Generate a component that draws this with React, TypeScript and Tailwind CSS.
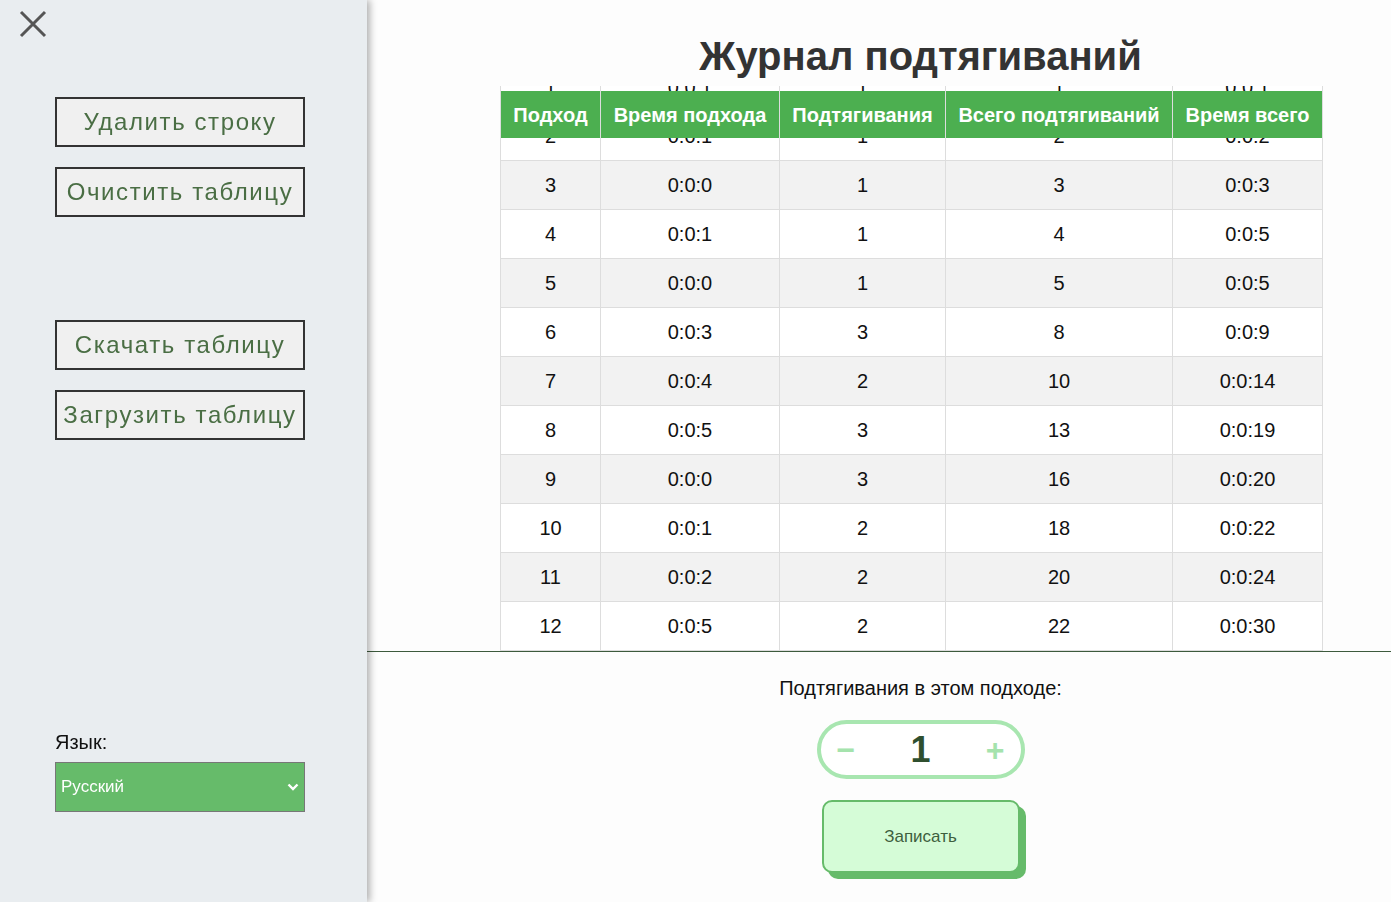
import React, { useEffect, useRef } from "react";

const ROWS = [
    [1, "0:0:1", 1, 1, "0:0:1"],
    [2, "0:0:1", 1, 2, "0:0:2"],
    [3, "0:0:0", 1, 3, "0:0:3"],
    [4, "0:0:1", 1, 4, "0:0:5"],
    [5, "0:0:0", 1, 5, "0:0:5"],
    [6, "0:0:3", 3, 8, "0:0:9"],
    [7, "0:0:4", 2, 10, "0:0:14"],
    [8, "0:0:5", 3, 13, "0:0:19"],
    [9, "0:0:0", 3, 16, "0:0:20"],
    [10, "0:0:1", 2, 18, "0:0:22"],
    [11, "0:0:2", 2, 20, "0:0:24"],
    [12, "0:0:5", 2, 22, "0:0:30"],
];

const HEADERS = [
    { label: "Подход", w: "w-[101px]" },
    { label: "Время подхода", w: "w-[179px]" },
    { label: "Подтягивания", w: "w-[166px]" },
    { label: "Всего подтягиваний", w: "w-[227px]" },
    { label: "Время всего", w: "w-[150px]" },
];

const SideButton = ({ children }: { children: React.ReactNode }) => (
    <button className="h-[50px] w-[250px] border-2 border-[#333] bg-[#f0f0f0] text-[24px] tracking-[1.6px] text-[#4a6e44]">
        {children}
    </button>
);

export default function App() {
    const scrollRef = useRef<HTMLDivElement>(null);

    useEffect(() => {
        // table keeps the newest set in view
        if (scrollRef.current) scrollRef.current.scrollTop = scrollRef.current.scrollHeight;
    }, []);

    return (
        <div className="flex h-[902px] w-full overflow-hidden bg-[#fdfdfd] font-['Liberation_Sans',Arial,sans-serif]">
            {/* Sidebar */}
            <aside className="relative z-10 flex h-full w-[367px] shrink-0 flex-col bg-[#e9edf0] px-[55px] shadow-[3px_0_7px_rgba(0,0,0,0.3)]">
                <button className="absolute left-[19px] top-[10px]" aria-label="close">
                    <svg width="28" height="28" viewBox="0 0 28 28">
                        <path d="M2 2 L26 26 M26 2 L2 26" stroke="#555" strokeWidth="3" />
                    </svg>
                </button>

                <div className="mt-[97px] flex flex-col gap-[20px]">
                    <SideButton>Удалить строку</SideButton>
                    <SideButton>Очистить таблицу</SideButton>
                </div>
                <div className="mt-[103px] flex flex-col gap-[20px]">
                    <SideButton>Скачать таблицу</SideButton>
                    <SideButton>Загрузить таблицу</SideButton>
                </div>

                <div className="mt-auto mb-[90px]">
                    <label className="block text-[20px] leading-[23px] text-[#111]">Язык:</label>
                    <div className="relative mt-[8px] h-[50px] w-[250px]">
                        <select className="h-full w-full appearance-none border border-[#777] bg-[#66bb6a] pl-[5px] text-[17px] text-white outline-none">
                            <option>Русский</option>
                            <option>English</option>
                        </select>
                        <svg className="pointer-events-none absolute right-[6px] top-[20px]" width="12" height="10" viewBox="0 0 12 10">
                            <path d="M1.5 2.5 L6 7 L10.5 2.5" stroke="#fff" strokeWidth="2.4" fill="none" />
                        </svg>
                    </div>
                </div>
            </aside>

            {/* Main */}
            <main className="flex min-w-0 flex-1 flex-col">
                <div className="h-[86px] shrink-0 pl-[83px] pt-[36px] text-center">
                    <h1 className="text-[40px] font-bold leading-none text-[#333]">Журнал подтягиваний</h1>
                </div>

                <div
                    ref={scrollRef}
                    className="h-[565px] shrink-0 overflow-y-auto [scrollbar-width:none]"
                >
                    <table className="ml-[133px] table-fixed border-separate border-spacing-0 text-[20px]">
                        <thead className="sticky top-[5px]">
                            <tr>
                                {HEADERS.map((h, i) => (
                                    <th
                                        key={h.label}
                                        className={`${h.w} h-[47px] border-r border-[#ddd] bg-[#4caf50] p-0 font-bold text-white ${i === 0 ? "border-l" : ""}`}
                                    >
                                        {h.label}
                                    </th>
                                ))}
                            </tr>
                        </thead>
                        <tbody>
                            {ROWS.map((r, ri) => (
                                <tr key={r[0]} className={ri % 2 === 0 && ri > 0 ? "bg-[#f2f2f2]" : "bg-white"}>
                                    {r.map((c, ci) => (
                                        <td
                                            key={ci}
                                            className={`h-[49px] border-b border-r border-[#ddd] p-0 text-center text-[#111] ${ci === 0 ? "border-l" : ""}`}
                                        >
                                            {c}
                                        </td>
                                    ))}
                                </tr>
                            ))}
                        </tbody>
                    </table>
                </div>

                <div className="flex flex-1 flex-col items-center border-t border-[#3d5a3d] pl-[83px]">
                    <p className="mt-[25px] text-[20px] leading-[23px] text-[#111]">Подтягивания в этом подходе:</p>

                    <div className="mt-[20px] flex h-[59px] w-[208px] items-center justify-between rounded-full border-4 border-[#a8e6b0] bg-white px-[16px]">
                        <span className="text-[32px] font-bold leading-none text-[#a5e3ad]">−</span>
                        <span className="text-[36px] font-bold leading-none text-[#2f4f2f]">1</span>
                        <span className="text-[32px] font-bold leading-none text-[#a5e3ad]">+</span>
                    </div>

                    <button className="mt-[21px] h-[73px] w-[198px] rounded-[10px] border-2 border-[#66bb6a] bg-[#d5fcd7] text-[17px] text-[#3e5f3e] shadow-[6px_6px_0_#66bb6a]">
                        Записать
                    </button>
                </div>
            </main>
        </div>
    );
}
